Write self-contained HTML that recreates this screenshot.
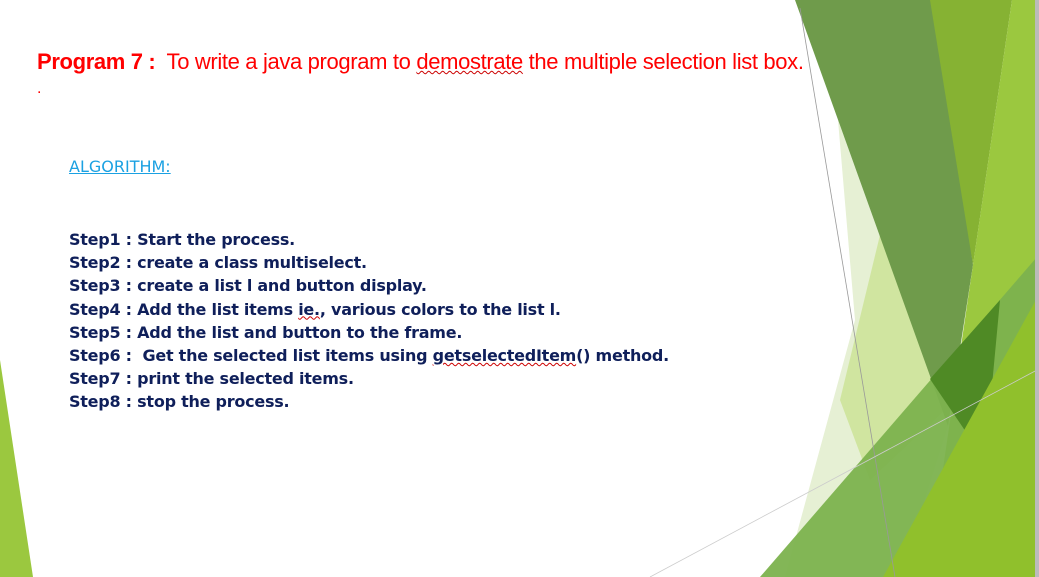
<!DOCTYPE html>
<html><head><meta charset="utf-8"><style>
html,body{margin:0;padding:0;background:#fff;width:1039px;height:577px;overflow:hidden;position:relative}
svg{position:absolute;left:0;top:0}
.t{position:absolute;left:37px;top:49px;font-family:"Liberation Sans",sans-serif;font-size:22px;color:#f00;white-space:nowrap;letter-spacing:-0.35px}
.t b{font-weight:bold}
.u{text-decoration:underline wavy #c00;text-decoration-thickness:1px}
.dot{position:absolute;left:37px;top:80px;font-family:"Liberation Sans",sans-serif;font-size:16px;color:#f00}
.alg{position:absolute;left:69px;top:157px;font-family:"DejaVu Sans",sans-serif;font-size:16px;color:#1ba1e2;text-decoration:underline}
.s{position:absolute;left:69px;top:228px;font-family:"DejaVu Sans",sans-serif;font-size:16px;font-weight:bold;line-height:23.2px;color:#0f1f5a;white-space:nowrap;letter-spacing:-0.25px}
</style></head><body>
<svg width="1039" height="577" viewBox="0 0 1039 577">
<polygon points="0,360 33,577 0,577" fill="#9bc83f"/>
<polygon points="838,120 948,426 900,577 785,577 855,320" fill="#e6f0d4"/>
<polygon points="880,235 945,410 870,480 840,400" fill="#d0e5a0"/>
<polygon points="795,0 937,0 973,265 948,426" fill="#6f9b4b"/>
<polygon points="930,0 1012,0 973,265" fill="#86b233"/>
<polygon points="1012,0 1037,0 1037,577 927,577" fill="#9bc83f"/>
<polygon points="760,577 1037,257 1037,577" fill="#7cb24e" opacity="0.95"/>
<polygon points="930,379 1000,300 985,460" fill="#4f8a25"/>
<polygon points="1037,298 1037,577 883,577" fill="#90c02c"/>
<line x1="800" y1="8" x2="895" y2="577" stroke="#999" stroke-width="0.8"/>
<line x1="650" y1="577" x2="1037" y2="370" stroke="#ccc" stroke-width="0.8"/>
<rect x="1035" y="0" width="4" height="577" fill="#bbb"/>
</svg>
<div class="t"><b>Program 7 :</b>&nbsp; To write a java program to <span class="u">demostrate</span> the multiple selection list box.</div>
<div class="dot">.</div>
<div class="alg">ALGORITHM:</div>
<div class="s">Step1 : Start the process.<br>Step2 : create a class multiselect.<br>Step3 : create a list l and button display.<br>Step4 : Add the list items <span class="u">ie.</span>, various colors to the list l.<br>Step5 : Add the list and button to the frame.<br>Step6 :&nbsp; Get the selected list items using <span class="u">getselectedItem</span>() method.<br>Step7 : print the selected items.<br>Step8 : stop the process.</div>
</body></html>
